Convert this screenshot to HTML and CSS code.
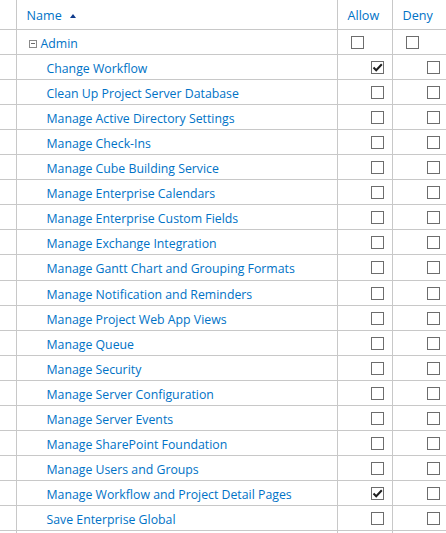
FILE: index.html
```html
<!DOCTYPE html>
<html>
<head>
<meta charset="utf-8">
<link rel="stylesheet" href="styles.css">
</head>
<body>
<table class="grid">
  <colgroup>
    <col class="c-gutter"><col class="c-name"><col class="c-allow"><col class="c-deny">
  </colgroup>
  <thead>
    <tr class="head">
      <th></th>
      <th class="name-h">Name <span class="sort"></span></th>
      <th class="perm-h">Allow</th>
      <th class="perm-h deny">Deny</th>
    </tr>
  </thead>
  <tbody>
    <tr class="group">
      <td></td>
      <td class="group-name"><span class="collapse"></span>Admin</td>
      <td class="cb-group"><span class="cb"></span></td>
      <td class="cb-group deny"><span class="cb"></span></td>
    </tr>
    <tr><td></td><td class="item">Change Workflow</td><td class="cb-cell"><span class="cb checked"><svg viewBox="0 0 11 11"><path d="M1.5 5.5 L4.2 8.2 L9.8 2.2" /></svg></span></td><td class="cb-cell deny"><span class="cb"></span></td></tr>
    <tr><td></td><td class="item">Clean Up Project Server Database</td><td class="cb-cell"><span class="cb"></span></td><td class="cb-cell deny"><span class="cb"></span></td></tr>
    <tr><td></td><td class="item">Manage Active Directory Settings</td><td class="cb-cell"><span class="cb"></span></td><td class="cb-cell deny"><span class="cb"></span></td></tr>
    <tr><td></td><td class="item">Manage Check-Ins</td><td class="cb-cell"><span class="cb"></span></td><td class="cb-cell deny"><span class="cb"></span></td></tr>
    <tr><td></td><td class="item">Manage Cube Building Service</td><td class="cb-cell"><span class="cb"></span></td><td class="cb-cell deny"><span class="cb"></span></td></tr>
    <tr><td></td><td class="item">Manage Enterprise Calendars</td><td class="cb-cell"><span class="cb"></span></td><td class="cb-cell deny"><span class="cb"></span></td></tr>
    <tr><td></td><td class="item">Manage Enterprise Custom Fields</td><td class="cb-cell"><span class="cb"></span></td><td class="cb-cell deny"><span class="cb"></span></td></tr>
    <tr><td></td><td class="item">Manage Exchange Integration</td><td class="cb-cell"><span class="cb"></span></td><td class="cb-cell deny"><span class="cb"></span></td></tr>
    <tr class="tall"><td></td><td class="item">Manage Gantt Chart and Grouping Formats</td><td class="cb-cell"><span class="cb"></span></td><td class="cb-cell deny"><span class="cb"></span></td></tr>
    <tr><td></td><td class="item">Manage Notification and Reminders</td><td class="cb-cell"><span class="cb"></span></td><td class="cb-cell deny"><span class="cb"></span></td></tr>
    <tr><td></td><td class="item">Manage Project Web App Views</td><td class="cb-cell"><span class="cb"></span></td><td class="cb-cell deny"><span class="cb"></span></td></tr>
    <tr><td></td><td class="item">Manage Queue</td><td class="cb-cell"><span class="cb"></span></td><td class="cb-cell deny"><span class="cb"></span></td></tr>
    <tr><td></td><td class="item">Manage Security</td><td class="cb-cell"><span class="cb"></span></td><td class="cb-cell deny"><span class="cb"></span></td></tr>
    <tr><td></td><td class="item">Manage Server Configuration</td><td class="cb-cell"><span class="cb"></span></td><td class="cb-cell deny"><span class="cb"></span></td></tr>
    <tr><td></td><td class="item">Manage Server Events</td><td class="cb-cell"><span class="cb"></span></td><td class="cb-cell deny"><span class="cb"></span></td></tr>
    <tr><td></td><td class="item">Manage SharePoint Foundation</td><td class="cb-cell"><span class="cb"></span></td><td class="cb-cell deny"><span class="cb"></span></td></tr>
    <tr><td></td><td class="item">Manage Users and Groups</td><td class="cb-cell"><span class="cb"></span></td><td class="cb-cell deny"><span class="cb"></span></td></tr>
    <tr><td></td><td class="item">Manage Workflow and Project Detail Pages</td><td class="cb-cell"><span class="cb checked"><svg viewBox="0 0 11 11"><path d="M1.5 5.5 L4.2 8.2 L9.8 2.2" /></svg></span></td><td class="cb-cell deny"><span class="cb"></span></td></tr>
    <tr><td></td><td class="item">Save Enterprise Global</td><td class="cb-cell"><span class="cb"></span></td><td class="cb-cell deny"><span class="cb"></span></td></tr>
    <tr><td></td><td class="item"></td><td class="cb-cell"></td><td class="cb-cell deny"></td></tr>
  </tbody>
</table>
</body>
</html>
```

FILE: styles.css
```css
html, body {
  margin: 0;
  padding: 0;
  background: #ffffff;
  overflow: hidden;
}

body {
  font-family: "Open Sans", "Liberation Sans", sans-serif;
  font-size: 12.3px;
  color: #0072c6;
}

.grid {
  border-collapse: collapse;
  table-layout: fixed;
  width: 446px;
}

.c-gutter { width: 16px; }
.c-name { width: 321px; }
.c-allow { width: 55px; }
.c-deny { width: 54px; }

.grid th,
.grid td {
  padding: 2px 0 0 0;
  border-bottom: 1px solid #c8c8c8;
  border-right: 1px solid #c8c8c8;
  height: 22px;
  box-sizing: content-box;
  text-align: left;
  vertical-align: middle;
  white-space: nowrap;
  font-weight: normal;
}

.grid th.deny,
.grid td.deny {
  border-right: none;
}

.grid tr.tall td { height: 23px; }

.grid tr.head th {
  height: 27px;
  color: #0072c6;
  font-size: 12.6px;
}

.name-h { padding-left: 10px !important; }
.perm-h { padding-left: 10px !important; }

.sort {
  display: inline-block;
  width: 0;
  height: 0;
  border-left: 3.5px solid transparent;
  border-right: 3.5px solid transparent;
  border-bottom: 4px solid #0f3b8c;
  margin-left: 5px;
  vertical-align: 2px;
}

.group-name {
  padding-left: 12px !important;
}

.collapse {
  display: inline-block;
  width: 6px;
  height: 6px;
  border: 1px solid #8a8a8a;
  position: relative;
  margin-right: 4px;
  vertical-align: 0px;
  background: #fff;
}

.collapse::after {
  content: "";
  position: absolute;
  left: 1px;
  right: 1px;
  top: 2.5px;
  height: 1px;
  background: #6a6a6a;
}

.item {
  padding-left: 30px !important;
}

.cb-group {
  padding-left: 13px !important;
}

.cb-cell {
  padding-left: 33px !important;
}

.cb-cell.deny {
  padding-left: 34px !important;
}

.cb {
  display: block;
  width: 11px;
  height: 11px;
  border: 1px solid #6d6d6d;
  background: #fff;
  margin-top: -2px;
}

.cb svg {
  display: block;
  width: 11px;
  height: 11px;
}

.cb svg path {
  fill: none;
  stroke: #1e1e1e;
  stroke-width: 2;
}
```
